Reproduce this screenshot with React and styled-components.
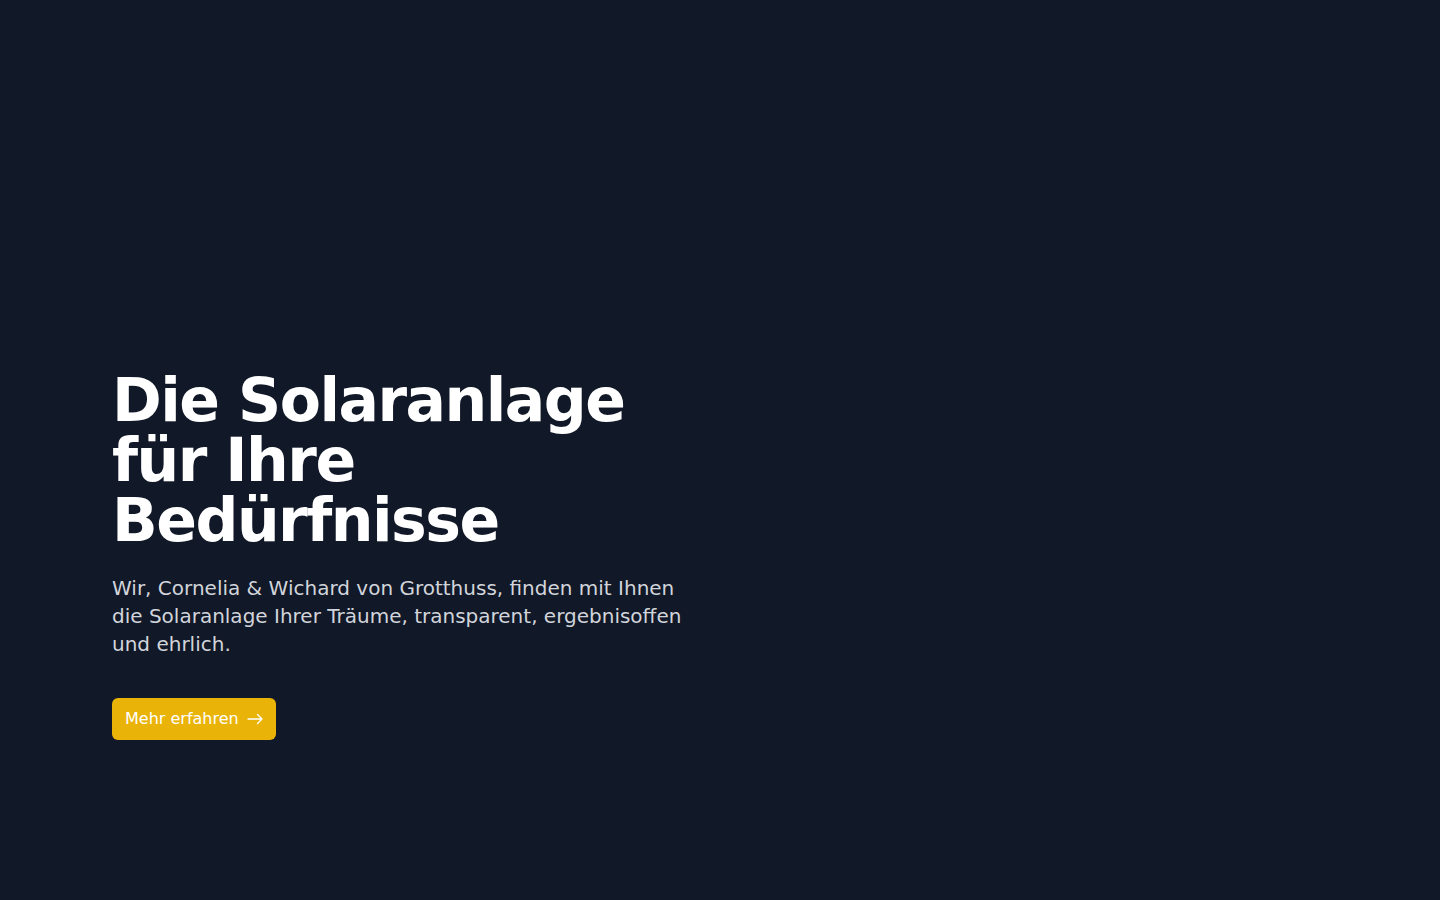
import React from 'react';
import styled, { createGlobalStyle } from 'styled-components';

const GlobalStyle = createGlobalStyle`
  html, body {
    margin: 0;
    padding: 0;
    background: #111827;
    font-family: "DejaVu Sans", sans-serif;
  }
  * {
    box-sizing: border-box;
  }
`;

const Hero = styled.section`
  min-height: 900px;
  background: #111827;
  display: flex;
  align-items: center;
  padding-top: 210px;
`;

const Container = styled.div`
  width: 100%;
  max-width: 1280px;
  margin: 0 auto;
  padding: 0 32px;
`;

const Content = styled.div`
  max-width: 576px;
`;

const Headline = styled.h1`
  margin: 0;
  color: #ffffff;
  font-size: 60px;
  line-height: 60px;
  font-weight: 700;
  letter-spacing: -0.025em;
`;

const Lead = styled.p`
  margin: 24px 0 0 0;
  color: #d1d5db;
  font-size: 20px;
  line-height: 28px;
`;

const Ctas = styled.div`
  margin-top: 40px;
  display: flex;
`;

const PrimaryButton = styled.a`
  display: inline-flex;
  align-items: center;
  gap: 8px;
  padding: 9px 13px;
  border-radius: 6px;
  background: #eab308;
  color: #ffffff;
  font-size: 16px;
  line-height: 24px;
  text-decoration: none;
`;

const Arrow = () => (
  <svg width="16" height="16" viewBox="0 0 16 16" fill="none" stroke="currentColor"
    strokeWidth="1.3" strokeLinecap="round" strokeLinejoin="round">
    <path d="M1 8h14M10.5 3.5 15 8l-4.5 4.5" />
  </svg>
);

const App = () => (
  <>
    <GlobalStyle />
    <Hero>
      <Container>
        <Content>
          <Headline>Die Solaranlage für Ihre Bedürfnisse</Headline>
          <Lead>
            Wir, Cornelia &amp; Wichard von Grotthuss, finden mit Ihnen die Solaranlage Ihrer
            Träume, transparent, ergebnisoffen und ehrlich.
          </Lead>
          <Ctas>
            <PrimaryButton href="#">
              Mehr erfahren
              <Arrow />
            </PrimaryButton>
          </Ctas>
        </Content>
      </Container>
    </Hero>
  </>
);

export default App;
